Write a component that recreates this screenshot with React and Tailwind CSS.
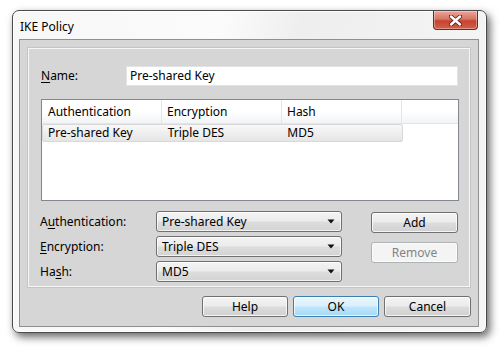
import React from "react";

const font = { fontFamily: '"Segoe UI", "Noto Sans", sans-serif' };

function Ul({ children }) {
  return <span className="underline underline-offset-2">{children}</span>;
}

function Arrow() {
  return (
    <svg width="8" height="5" viewBox="0 0 8 5" className="shrink-0">
      <path d="M0.5 0.5 H7.5 L4 4.5 Z" fill="#111" />
    </svg>
  );
}

function Combo({ value }) {
  return (
    <div className="flex h-[21px] w-[186px] items-center justify-between rounded-[3px] border border-[#707070] bg-[linear-gradient(#f4f4f4_0%,#ebebeb_48%,#dddddd_52%,#d3d3d3_100%)] pl-[5px] pr-[6px] shadow-[inset_0_0_0_1px_rgba(255,255,255,0.7)]">
      <span className="text-[12px] leading-none text-black">{value}</span>
      <Arrow />
    </div>
  );
}

function Button({ children, variant }) {
  let cls =
    "border-[#707070] bg-[linear-gradient(#f4f4f4_0%,#ebebeb_48%,#dddddd_52%,#d0d0d0_100%)] text-black";
  if (variant === "default") {
    cls =
      "border-[#3c7fb1] bg-[linear-gradient(#eaf6fd_0%,#d9f0fc_48%,#bee6fd_52%,#a7d9f5_100%)] text-black";
  }
  if (variant === "disabled") {
    cls = "border-[#adb2b5] bg-[#f4f4f4] text-[#838383]";
  }
  return (
    <div
      className={
        "flex h-[21px] items-center justify-center rounded-[3px] border text-[12px] leading-none shadow-[inset_0_0_0_1px_rgba(255,255,255,0.75)] " +
        cls
      }
    >
      {children}
    </div>
  );
}

export default function App() {
  return (
    <div className="h-[351px] w-[501px] overflow-hidden bg-white pl-[12px] pt-[10px]" style={font}>
      <div className="relative flex h-[323px] w-[475px] flex-col rounded-[7px] border border-[#4a4a4a] bg-[linear-gradient(100deg,#f7f7f7_0%,#fbfbfb_40%,#eeeeee_55%,#f6f6f6_100%)] px-[6px] pb-[5px] shadow-[3px_4px_9px_rgba(0,0,0,0.6),inset_0_0_0_1px_rgba(255,255,255,0.9)]">
        <div className="flex h-[28px] items-center pl-[1px] pt-[4px] text-[12px] text-black">IKE Policy</div>

        <div className="absolute right-[8px] top-0 flex h-[19px] w-[45px] items-center justify-center rounded-b-[4px] border border-t-0 border-[#6b2a22] bg-[linear-gradient(#eba699_0%,#d87464_45%,#c4432f_55%,#d5604a_100%)] shadow-[inset_0_0_0_1px_rgba(255,255,255,0.35)]">
          <svg width="13" height="11" viewBox="0 0 13 11">
            <path
              d="M2 1.5 L11 9.5 M11 1.5 L2 9.5"
              stroke="#5a1f17"
              strokeWidth="4.2"
              strokeLinecap="round"
            />
            <path
              d="M2 1.5 L11 9.5 M11 1.5 L2 9.5"
              stroke="#ffffff"
              strokeWidth="2.4"
              strokeLinecap="round"
            />
          </svg>
        </div>

        <div className="flex h-[288px] w-[460px] flex-col border border-[#8e8f8f] bg-[#d6d6d6] pt-[8px]">
          <div className="mx-[8px] flex h-[239px] flex-col border border-[#f6f6f6] pl-[12px] pt-[17px] shadow-[0_0_0_1px_#c4c4c4]">
            <div className="flex h-[20px] items-center">
              <div className="w-[85px] text-[12px] text-black">
                <Ul>N</Ul>ame:
              </div>
              <div className="flex h-[20px] w-[332px] items-center border border-[#e3e3e3] bg-white pl-[3px] text-[12px] text-black">
                Pre-shared Key
              </div>
            </div>

            <div className="mt-[13px] h-[102px] w-[418px] border border-[#828790] bg-white">
              <div className="flex h-[24px] border-b border-[#e5e5e5] bg-[linear-gradient(#ffffff_0%,#ffffff_50%,#f3f4f6_100%)] text-[12px] text-black">
                <div className="flex w-[120px] items-center border-r border-[#e5e5e5] pl-[6px]">Authentication</div>
                <div className="flex w-[120px] items-center border-r border-[#e5e5e5] pl-[5px]">Encryption</div>
                <div className="flex w-[120px] items-center border-r border-[#e5e5e5] pl-[5px]">Hash</div>
                <div className="flex-1" />
              </div>
              <div className="flex h-[18px] w-[361px] items-center rounded-[2px] border border-[#d9d9d9] bg-[linear-gradient(#f8f8f8_0%,#e5e5e5_100%)] text-[12px] text-black">
                <div className="w-[120px] pl-[5px]">Pre-shared Key</div>
                <div className="w-[120px] pl-[5px]">Triple DES</div>
                <div className="w-[120px] pl-[5px]">MD5</div>
              </div>
            </div>

            <div className="mt-[10px] flex">
              <div className="-ml-[1px] flex flex-col gap-[4px]">
                <div className="flex items-center">
                  <div className="w-[116px] text-[12px] text-black">
                    A<Ul>u</Ul>thentication:
                  </div>
                  <Combo value="Pre-shared Key" />
                </div>
                <div className="flex items-center">
                  <div className="w-[116px] text-[12px] text-black">
                    <Ul>E</Ul>ncryption:
                  </div>
                  <Combo value="Triple DES" />
                </div>
                <div className="flex items-center">
                  <div className="w-[116px] text-[12px] text-black">
                    Ha<Ul>s</Ul>h:
                  </div>
                  <Combo value="MD5" />
                </div>
              </div>
              <div className="ml-[29px] mt-[1px] flex w-[87px] flex-col gap-[9px]">
                <Button>Add</Button>
                <Button variant="disabled">Remove</Button>
              </div>
            </div>
          </div>

          <div className="mt-[9px] flex justify-end gap-[5px] pr-[7px]">
            <div className="w-[86px]">
              <Button>Help</Button>
            </div>
            <div className="w-[86px]">
              <Button variant="default">OK</Button>
            </div>
            <div className="w-[87px]">
              <Button>Cancel</Button>
            </div>
          </div>
        </div>
      </div>
    </div>
  );
}
